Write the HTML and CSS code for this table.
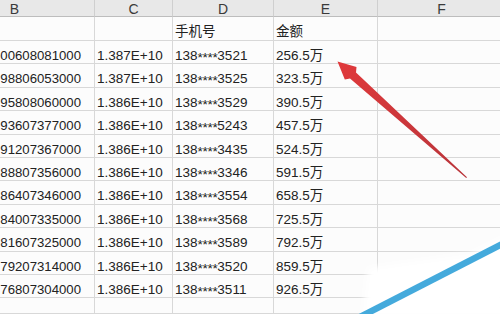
FILE: index.html
```html
<!DOCTYPE html>
<html lang="zh">
<head>
<meta charset="utf-8">
<link rel="stylesheet" href="styles.css">
</head>
<body>
<div class="sheet">
  <div class="grid">
    <div class="cell hd">B</div>
    <div class="cell hd">C</div>
    <div class="cell hd">D</div>
    <div class="cell hd">E</div>
    <div class="cell hd">F</div>

    <div class="cell b"></div><div class="cell"></div><div class="cell">手机号</div><div class="cell">金额</div><div class="cell"></div>

    <div class="cell b">00608081000</div><div class="cell">1.387E+10</div><div class="cell">138<span class="mask">****</span>3521</div><div class="cell">256.5万</div><div class="cell"></div>
    <div class="cell b">98806053000</div><div class="cell">1.387E+10</div><div class="cell">138<span class="mask">****</span>3525</div><div class="cell">323.5万</div><div class="cell"></div>
    <div class="cell b">95808060000</div><div class="cell">1.386E+10</div><div class="cell">138<span class="mask">****</span>3529</div><div class="cell">390.5万</div><div class="cell"></div>
    <div class="cell b">93607377000</div><div class="cell">1.386E+10</div><div class="cell">138<span class="mask">****</span>5243</div><div class="cell">457.5万</div><div class="cell"></div>
    <div class="cell b">91207367000</div><div class="cell">1.386E+10</div><div class="cell">138<span class="mask">****</span>3435</div><div class="cell">524.5万</div><div class="cell"></div>
    <div class="cell b">88807356000</div><div class="cell">1.386E+10</div><div class="cell">138<span class="mask">****</span>3346</div><div class="cell">591.5万</div><div class="cell"></div>
    <div class="cell b">86407346000</div><div class="cell">1.386E+10</div><div class="cell">138<span class="mask">****</span>3554</div><div class="cell">658.5万</div><div class="cell"></div>
    <div class="cell b">84007335000</div><div class="cell">1.386E+10</div><div class="cell">138<span class="mask">****</span>3568</div><div class="cell">725.5万</div><div class="cell"></div>
    <div class="cell b">81607325000</div><div class="cell">1.386E+10</div><div class="cell">138<span class="mask">****</span>3589</div><div class="cell">792.5万</div><div class="cell"></div>
    <div class="cell b">79207314000</div><div class="cell">1.386E+10</div><div class="cell">138<span class="mask">****</span>3520</div><div class="cell">859.5万</div><div class="cell"></div>
    <div class="cell b">76807304000</div><div class="cell">1.386E+10</div><div class="cell">138<span class="mask">****</span>3511</div><div class="cell">926.5万</div><div class="cell"></div>

    <div class="cell b"></div><div class="cell"></div><div class="cell"></div><div class="cell"></div><div class="cell"></div>
  </div>

  <svg class="overlay" viewBox="0 0 500 314" width="500" height="314" aria-hidden="true">
    <defs>
      <filter id="soft" x="-20%" y="-20%" width="140%" height="140%">
        <feGaussianBlur stdDeviation="3"/>
      </filter>
      <linearGradient id="red" x1="338" y1="62" x2="467" y2="178" gradientUnits="userSpaceOnUse">
        <stop offset="0" stop-color="#e0393b"/>
        <stop offset="1" stop-color="#b8343a"/>
      </linearGradient>
    </defs>
    <polygon points="368,268 470,254 506,236 506,320 362,320" fill="#ffffff" filter="url(#soft)"/>
    <line x1="358" y1="318" x2="504" y2="243" stroke="#44aadc" stroke-width="6.5"/>
    <polygon points="337.5,61.5 356.5,67 356,72.6 467,177.3 466.2,178.1 350,78.6 344.8,79.6" fill="url(#red)"/>
  </svg>
</div>
</body>
</html>
```

FILE: styles.css
```css
html, body {
  margin: 0;
  padding: 0;
  background: #ffffff;
}

.sheet {
  position: relative;
  width: 500px;
  height: 314px;
  overflow: hidden;
  background: #fcfcfc;
  font-family: "Liberation Sans", "Noto Sans CJK SC", sans-serif;
  font-size: 13.5px;
  color: #222222;
}

.grid {
  display: grid;
  margin-left: -65px;
  width: 571px;
  height: 314px;
  grid-template-columns: 160px 78px 101px 104px 128px;
  grid-template-rows: 17px 24px repeat(11, 23.4px) 1fr;
}

.cell {
  box-sizing: border-box;
  border-right: 1px solid #d8d8d8;
  border-bottom: 1px solid #d8d8d8;
  padding: 6px 2px 0 2px;
  line-height: 17px;
  white-space: nowrap;
  overflow: hidden;
}

.cell.b {
  text-align: right;
  padding-right: 13px;
  font-size: 13.2px;
}

.mask {
  position: relative;
  top: 2px;
  letter-spacing: -0.3px;
}

.hd {
  background: #e8e8e8;
  border-right-color: #cfcfcf;
  border-bottom-color: #bdbdbd;
  color: #3a3a3a;
  text-align: center;
  padding-top: 1px;
  font-size: 14px;
}

.overlay {
  position: absolute;
  left: 0;
  top: 0;
  pointer-events: none;
}
```
